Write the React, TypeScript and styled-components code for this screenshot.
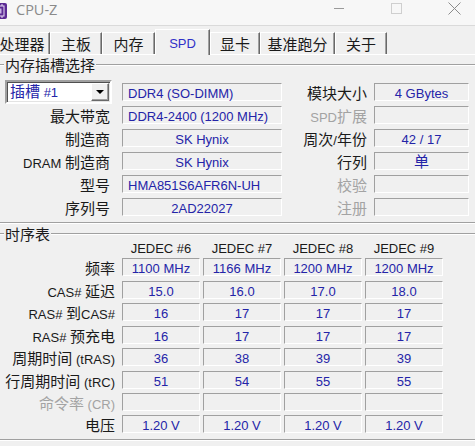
import React from "react";
import styled, { createGlobalStyle } from "styled-components";

const GlobalStyle = createGlobalStyle`
  html, body {
    margin: 0;
    padding: 0;
    background: #f0f0f0;
    overflow: hidden;
  }
  body {
    font-family: "Liberation Sans", "Noto Sans CJK SC", sans-serif;
    font-size: 13px;
    color: #1a1a1a;
  }
`;

const BLUE = "#2424a8";

// window is a bit wider than the shot, both edges are cut off
const Window = styled.div`
  width: 492px;
  height: 446px;
  margin-left: -9px;
  background: #f0f0f0;
`;

const TitleBar = styled.div`
  height: 25px;
  display: flex;
  align-items: flex-start;
  background: #f7f7f7;
  border-bottom: 1px solid #dadada;
`;

const AppIcon = styled.svg`
  width: 16px;
  height: 16px;
  margin-top: 3px;
  flex: none;
`;

const Title = styled.span`
  margin-left: 9px;
  font-family: "Open Sans", "Liberation Sans", sans-serif;
  font-size: 14.5px;
  line-height: 19px;
  color: #8a8a8a;
`;

const Controls = styled.div`
  margin-left: auto;
  display: flex;
`;

const CtrlButton = styled.div`
  width: 57.5px;
  height: 17px;
  display: flex;
  align-items: center;
  justify-content: center;
`;

const TabStrip = styled.div`
  height: 28px;
  display: flex;
  align-items: flex-end;
  padding-left: 3px;
  border-bottom: 1px solid #fff;
`;

const Tab = styled.div<{ $w: number; $active?: boolean }>`
  width: ${(p) => p.$w}px;
  height: ${(p) => (p.$active ? 26 : 22)}px;
  margin-bottom: ${(p) => (p.$active ? -1 : 0)}px;
  padding-top: ${(p) => (p.$active ? 2 : 0)}px;
  box-sizing: border-box;
  display: flex;
  align-items: center;
  justify-content: center;
  background: #f0f0f0;
  border-top: 1px solid #fff;
  border-left: 1px solid #fff;
  border-right: 1px solid #696969;
  box-shadow: inset -1px 0 0 #a0a0a0;
  color: ${(p) => (p.$active ? "#3030c8" : "#1a1a1a")};
  white-space: nowrap;
`;

const Panel = styled.div`
  padding: 3px 5px 0 5px;
`;

const Group = styled.section`
  & + & {
    margin-top: 4px;
  }
`;

const GroupHead = styled.div`
  height: 14px;
  display: flex;
  align-items: center;
  &::before,
  &::after {
    content: "";
    border-top: 1px solid #a0a0a0;
    border-bottom: 1px solid #fff;
  }
  &::before {
    width: 8px;
  }
  &::after {
    flex: 1;
  }
`;

const GroupTitle = styled.span`
  padding: 0 1px;
  line-height: 14px;
`;

const GroupBody = styled.div<{ $top: number }>`
  padding: ${(p) => p.$top}px 0 6px 3px;
  border: 1px solid #a0a0a0;
  border-top: none;
  box-shadow: 0 1px 0 #fff;
`;

const SlotGrid = styled.div`
  display: grid;
  grid-template-columns: 122px 160px 92px 95px;
  grid-auto-rows: 18px;
  row-gap: 5px;
`;

const TimingGrid = styled.div`
  display: grid;
  grid-template-columns: 119px repeat(4, 78px);
  grid-template-rows: 13px;
  grid-auto-rows: 18px;
  column-gap: 3px;
  row-gap: 4.43px;
`;

const Label = styled.div<{ $pr: number; $gray?: boolean }>`
  height: 18px;
  line-height: 23px;
  text-align: right;
  padding-right: ${(p) => p.$pr}px;
  white-space: nowrap;
  color: ${(p) => (p.$gray ? "#a3a3a3" : "#1a1a1a")};
`;

const ColHead = styled.div`
  line-height: 15.5px;
  text-align: center;
  white-space: nowrap;
`;

const Value = styled.div<{ $left?: boolean }>`
  height: 18px;
  box-sizing: border-box;
  border-top: 1px solid #a0a0a0;
  border-left: 1px solid #a0a0a0;
  border-right: 1px solid #fff;
  border-bottom: 1px solid #fff;
  line-height: 19px;
  padding-left: ${(p) => (p.$left ? 5 : 0)}px;
  text-align: ${(p) => (p.$left ? "left" : "center")};
  color: ${BLUE};
  white-space: nowrap;
  overflow: visible;
`;

const Select = styled.div`
  width: 107px;
  height: 24px;
  margin: -3px 0 0 5px;
  box-sizing: border-box;
  display: flex;
  align-items: center;
  padding-left: 3px;
  background: #fff;
  border: 2px solid;
  border-color: #a0a0a0 #fff #fff #a0a0a0;
  box-shadow: inset 1px 1px 0 #505050, inset -1px -1px 0 #e3e3e3;
  color: ${BLUE};
  line-height: 20px;
  white-space: nowrap;
`;

const SelectText = styled.span`
  flex: 1;
  padding-top: 2px;
`;

const ArrowButton = styled.div`
  width: 18px;
  height: 18px;
  margin-right: 1px;
  box-sizing: border-box;
  display: flex;
  align-items: center;
  justify-content: center;
  background: #f0f0f0;
  border: 1px solid;
  border-color: #fff #696969 #696969 #fff;
  box-shadow: inset -1px -1px 0 #a0a0a0;
  &::after {
    content: "";
    border-left: 4px solid transparent;
    border-right: 4px solid transparent;
    border-top: 4px solid #000;
  }
`;

const Han = styled.span`
  font-family: "Noto Sans CJK SC", sans-serif;
  font-size: 15px;
  line-height: 1;
`;

const HAN = /([\u2e80-\u9fff\uf900-\ufaff\uff00-\uffef]+)/;

function Txt({ children }: { children: string }) {
  return (
    <>
      {children.split(HAN).map((part, i) =>
        i % 2 ? <Han key={i}>{part}</Han> : part
      )}
    </>
  );
}

const tabs = [
  { name: "处理器", w: 56 },
  { name: "主板", w: 52 },
  { name: "内存", w: 53 },
  { name: "SPD", w: 55, active: true },
  { name: "显卡", w: 50 },
  { name: "基准跑分", w: 75 },
  { name: "关于", w: 52 },
];

interface SlotRow {
  label: string;
  value: string;
  left?: boolean;
  rlabel: string;
  rgray?: boolean;
  rvalue: string;
}

const slotRows: SlotRow[] = [
  { label: "最大带宽", value: "DDR4-2400 (1200 MHz)", left: true, rlabel: "SPD扩展", rgray: true, rvalue: "" },
  { label: "制造商", value: "SK Hynix", rlabel: "周次/年份", rvalue: "42 / 17" },
  { label: "DRAM 制造商", value: "SK Hynix", rlabel: "行列", rvalue: "单" },
  { label: "型号", value: "HMA851S6AFR6N-UH", left: true, rlabel: "校验", rgray: true, rvalue: "" },
  { label: "序列号", value: "2AD22027", rlabel: "注册", rgray: true, rvalue: "" },
];

const columns = ["JEDEC #6", "JEDEC #7", "JEDEC #8", "JEDEC #9"];

const timings: { label: string; gray?: boolean; values: string[] }[] = [
  { label: "频率", values: ["1100 MHz", "1166 MHz", "1200 MHz", "1200 MHz"] },
  { label: "CAS# 延迟", values: ["15.0", "16.0", "17.0", "18.0"] },
  { label: "RAS# 到CAS#", values: ["16", "17", "17", "17"] },
  { label: "RAS# 预充电", values: ["16", "17", "17", "17"] },
  { label: "周期时间 (tRAS)", values: ["36", "38", "39", "39"] },
  { label: "行周期时间 (tRC)", values: ["51", "54", "55", "55"] },
  { label: "命令率 (CR)", gray: true, values: ["", "", "", ""] },
  { label: "电压", values: ["1.20 V", "1.20 V", "1.20 V", "1.20 V"] },
];

export default function App() {
  return (
    <>
      <GlobalStyle />
      <Window>
        <TitleBar>
          <AppIcon viewBox="0 0 16 16">
            <rect x="0" y="0" width="16" height="16" rx="2" fill="#5b2a93" />
            <rect x="3" y="3" width="10" height="10" fill="none" stroke="#e8dcf5" strokeWidth="1" />
            <path d="M5 1v2M8 1v2M11 1v2M5 13v2M8 13v2M11 13v2M1 6h2M1 10h2" stroke="#e8dcf5" strokeWidth="1" />
            <rect x="5.5" y="5.5" width="5" height="5" fill="#c9b3e6" />
          </AppIcon>
          <Title>CPU-Z</Title>
          <Controls>
            <CtrlButton>
              <svg width="10" height="1" viewBox="0 0 10 1">
                <rect width="10" height="1" fill="#9a9a9a" />
              </svg>
            </CtrlButton>
            <CtrlButton>
              <svg width="11" height="11" viewBox="0 0 11 11">
                <rect x="0.5" y="0.5" width="10" height="10" fill="none" stroke="#cfcfcf" />
              </svg>
            </CtrlButton>
            <CtrlButton>
              <svg width="13" height="13" viewBox="0 0 13 13">
                <path d="M0.5 0.5L12.5 12.5M12.5 0.5L0.5 12.5" stroke="#8c8c8c" strokeWidth="1" />
              </svg>
            </CtrlButton>
          </Controls>
        </TitleBar>

        <TabStrip>
          {tabs.map((t) => (
            <Tab key={t.name} $w={t.w} $active={t.active}>
              <Txt>{t.name}</Txt>
            </Tab>
          ))}
        </TabStrip>

        <Panel>
          <Group>
            <GroupHead>
              <GroupTitle>
                <Txt>内存插槽选择</Txt>
              </GroupTitle>
            </GroupHead>
            <GroupBody $top={11}>
              <SlotGrid>
                <Select>
                  <SelectText>
                    <Txt>插槽 #1</Txt>
                  </SelectText>
                  <ArrowButton />
                </Select>
                <Value $left>DDR4 (SO-DIMM)</Value>
                <Label $pr={7}>
                  <Txt>模块大小</Txt>
                </Label>
                <Value>4 GBytes</Value>
                {slotRows.map((r) => (
                  <React.Fragment key={r.label}>
                    <Label $pr={12}>
                      <Txt>{r.label}</Txt>
                    </Label>
                    <Value $left={r.left}>{r.value}</Value>
                    <Label $pr={7} $gray={r.rgray}>
                      <Txt>{r.rlabel}</Txt>
                    </Label>
                    <Value>
                      <Txt>{r.rvalue}</Txt>
                    </Value>
                  </React.Fragment>
                ))}
              </SlotGrid>
            </GroupBody>
          </Group>

          <Group>
            <GroupHead>
              <GroupTitle>
                <Txt>时序表</Txt>
              </GroupTitle>
            </GroupHead>
            <GroupBody $top={0}>
              <TimingGrid>
                <div />
                {columns.map((c) => (
                  <ColHead key={c}>{c}</ColHead>
                ))}
                {timings.map((row) => (
                  <React.Fragment key={row.label}>
                    <Label $pr={4} $gray={row.gray}>
                      <Txt>{row.label}</Txt>
                    </Label>
                    {row.values.map((v, i) => (
                      <Value key={i}>{v}</Value>
                    ))}
                  </React.Fragment>
                ))}
              </TimingGrid>
            </GroupBody>
          </Group>
        </Panel>
      </Window>
    </>
  );
}
